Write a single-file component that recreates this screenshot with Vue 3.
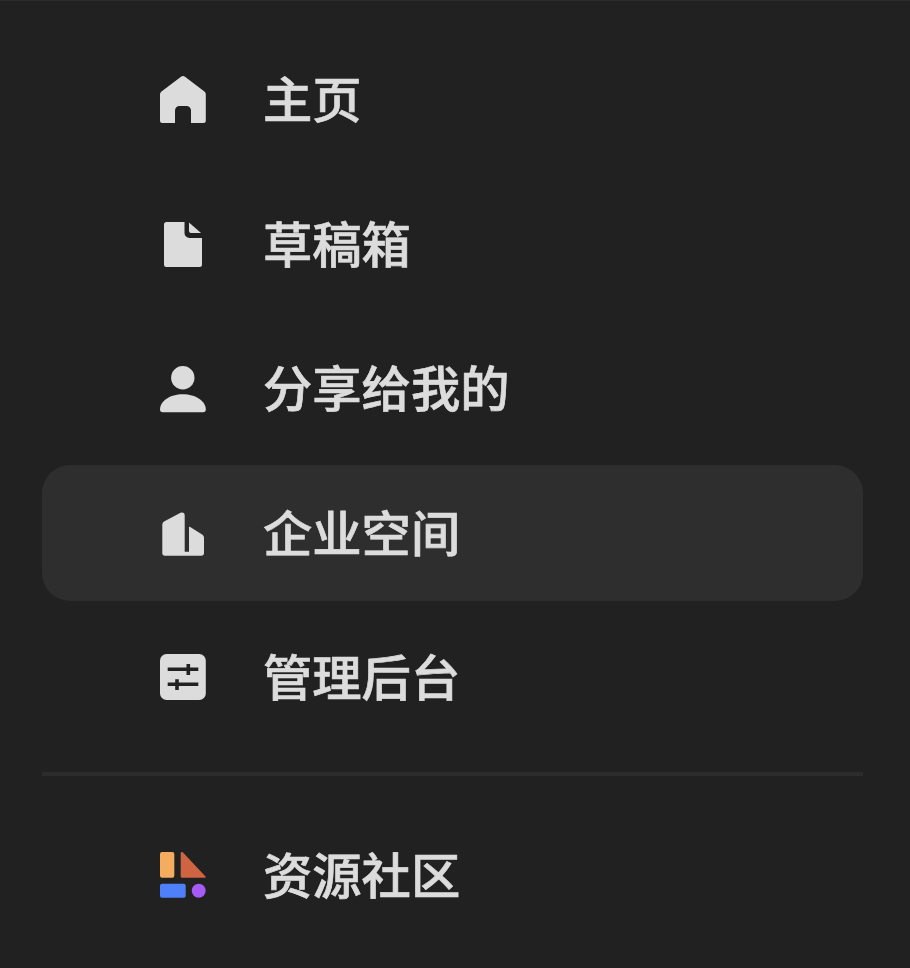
<script setup>
const topItems = [
  { label: '主页', icon: 'home' },
  { label: '草稿箱', icon: 'file' },
  { label: '分享给我的', icon: 'user' },
  { label: '企业空间', icon: 'building', active: true },
  { label: '管理后台', icon: 'sliders' }
];
</script>

<template>
  <div class="menu">
    <div class="group">
      <div
        v-for="item in topItems"
        :key="item.label"
        class="row"
        :class="{ active: item.active }"
      >
        <svg class="icon" viewBox="0 0 48 48" fill="#dcdcdc">
          <path
            v-if="item.icon === 'home'"
            d="M21 .8a3.2 3.2 0 0 1 4 0L44.400 15.400A3.500 3.500 0 0 1 45.800 18.200V44.500A2.500 2.500 0 0 1 43.300 47H31V34.500A4.500 4.500 0 0 0 26.500 30H19.500A4.500 4.500 0 0 0 15 34.500V47H2.500A2.500 2.500 0 0 1 0 44.500V18.200A3.500 3.500 0 0 1 1.500 15.400Z"
          />
          <template v-else-if="item.icon === 'file'">
            <path d="M6.500 2H24.500V13A5 5 0 0 0 29.500 18H42V44.500A2.500 2.500 0 0 1 39.500 47H6.500A2.500 2.500 0 0 1 4 44.500V4.500A2.500 2.500 0 0 1 6.500 2Z" />
            <path d="M29 2.500 41 13H31A2 2 0 0 1 29 11Z" />
          </template>
          <template v-else-if="item.icon === 'user'">
            <circle cx="22.800" cy="12.700" r="11.700" />
            <path d="M0 44.500C0 36 10 29.300 22.800 29.300S45.800 36 45.800 44.500A2.800 2.800 0 0 1 43 47.300H2.800A2.800 2.800 0 0 1 0 44.500Z" />
          </template>
          <template v-else-if="item.icon === 'building'">
            <path d="M2.300 15.500A3.500 3.500 0 0 1 4.500 12.300L20.500 3.800A2.800 2.800 0 0 1 24.700 6.300V42.800H29V18.500A.8.8 0 0 1 30.200 17.900L42.500 25.800A3.500 3.500 0 0 1 44 28.500V44A2.800 2.800 0 0 1 41.200 46.800H5A2.800 2.800 0 0 1 2.300 44Z" />
          </template>
          <template v-else-if="item.icon === 'sliders'">
            <rect width="45.800" height="46" rx="6.500" />
            <path
              d="M7.700 15.300H38.300M28.300 10V21M7.700 30.300H38.300M17 25.300V36"
              fill="none"
              stroke="#212121"
              stroke-width="3.600"
            />
          </template>
        </svg>
        <span class="label">{{ item.label }}</span>
      </div>
    </div>
    <div class="divider"></div>
    <div class="row">
      <svg class="icon" viewBox="0 0 48 48">
        <rect width="14.300" height="25.700" rx="2" fill="#f4ad5f" />
        <path d="M20.700 1.500C20.700 .2 22 -.4 23 .6L45.300 24.200C46.200 25 45.600 25.700 44.500 25.700H22.200A1.500 1.500 0 0 1 20.700 24.200Z" fill="#cf6443" />
        <rect y="31.700" width="25.700" height="14" rx="2" fill="#4e80fa" />
        <circle cx="38.700" cy="38.700" r="7" fill="#a65bf5" />
      </svg>
      <span class="label">资源社区</span>
    </div>
  </div>
</template>

<style scoped>
.menu {
  box-sizing: border-box;
  height: 968px;
  padding: 31px 47px 0 42px;
  border-top: 1px solid #2c2c2c;
  background-color: #212121;
  font-family: "Noto Sans CJK SC", "Noto Sans", sans-serif;
}

.group {
  display: flex;
  flex-direction: column;
  gap: 8.4px;
}

.row {
  display: flex;
  align-items: center;
  gap: 55px;
  height: 136px;
  padding-left: 118px;
  border-radius: 28px;
}

.row.active {
  background-color: #2e2e2e;
}

.icon {
  width: 48px;
  height: 48px;
  flex-shrink: 0;
}

.label {
  margin-bottom: 6px;
  font-size: 49.300px;
  font-weight: 500;
  line-height: 1;
  color: #dcdcdc;
  -webkit-text-stroke: 0.7px #dcdcdc;
}

.divider {
  height: 4px;
  margin: 26.400px 0 32px;
  background-color: #2c2c2c;
}
</style>

<style>
body {
  background-color: #212121;
}
</style>
